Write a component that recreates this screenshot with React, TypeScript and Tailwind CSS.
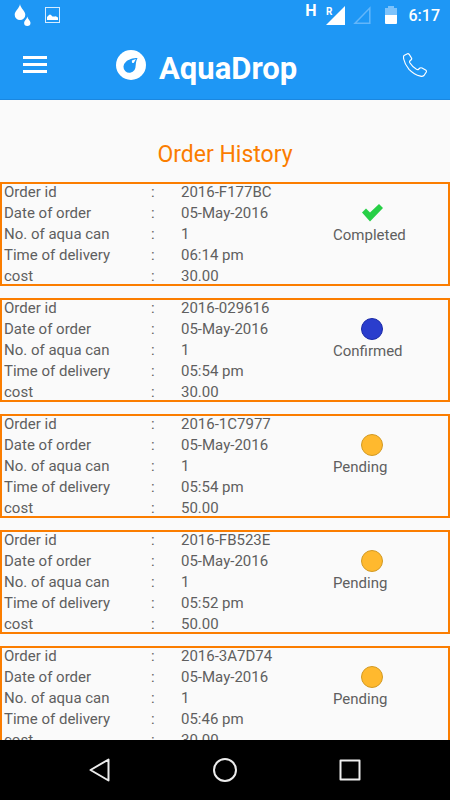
type Status = "Completed" | "Confirmed" | "Pending";

interface Order {
  id: string;
  date: string;
  cans: number;
  time: string;
  cost: string;
  status: Status;
}

const ORDERS: Order[] = [
  { id: "2016-F177BC", date: "05-May-2016", cans: 1, time: "06:14 pm", cost: "30.00", status: "Completed" },
  { id: "2016-029616", date: "05-May-2016", cans: 1, time: "05:54 pm", cost: "30.00", status: "Confirmed" },
  { id: "2016-1C7977", date: "05-May-2016", cans: 1, time: "05:54 pm", cost: "50.00", status: "Pending" },
  { id: "2016-FB523E", date: "05-May-2016", cans: 1, time: "05:52 pm", cost: "50.00", status: "Pending" },
  { id: "2016-3A7D74", date: "05-May-2016", cans: 1, time: "05:46 pm", cost: "30.00", status: "Pending" },
];

function StatusBar() {
  return (
    <div className="flex h-[30px] items-center justify-between pr-[10px] pl-[14px] text-white">
      <div className="flex items-center gap-[14px]">
        <svg className="h-[23px] w-[17px]" viewBox="0 0 17 23" fill="currentColor" aria-hidden="true">
          <path d="M6 0C6.4 4 11.3 7 11.3 10.700A5.300 5.300 0 0 1 .7 10.700C.7 7 5.600 4 6 0Z" />
          <path d="M13.300 12.500C13.500 15 16.500 16.500 16.500 18.800A3.200 3.200 0 0 1 10.100 18.800C10.100 16.500 13.100 15 13.300 12.500Z" />
        </svg>
        <svg className="h-4 w-[15px]" viewBox="0 0 15 16" aria-hidden="true">
          <rect x=".5" y=".5" width="14" height="15" fill="none" stroke="#d6ecff" />
          <path d="M2 13V10L4 8Q5 7 6 8L7.500 9.500H10Q11 9 12 10L13 10.500V13Z" fill="white" />
        </svg>
      </div>
      <div className="flex items-center">
        <span className="mr-[9px] mb-2 text-base leading-4 font-bold">H</span>
        <svg className="mr-2 h-5 w-[19px]" viewBox="0 0 19 20" fill="white" aria-hidden="true">
          <path d="M19 1V20H0Z" />
          <text x="0" y="10" fontSize="10" fontWeight="700" fontFamily="Roboto, sans-serif">R</text>
        </svg>
        <svg className="mr-[14px] h-5 w-[18px]" viewBox="0 0 18 20" fill="none" stroke="#63b6fa" strokeWidth="1.500" aria-hidden="true">
          <path d="M16.800 3V18.200H2Z" />
        </svg>
        <svg className="mr-3 h-[18px] w-3" viewBox="0 0 12 18" aria-hidden="true">
          <path d="M0 2H3V0H9V2H12V9H0Z" fill="#7cc2fb" />
          <path d="M0 9H12V17Q12 18 11 18H1Q0 18 0 17Z" fill="white" />
        </svg>
        <span className="pt-px text-base leading-5 font-medium">6:17</span>
      </div>
    </div>
  );
}

function AppBar() {
  return (
    <div className="flex h-[70px] items-center border-b border-[#1a87e0] px-[23px] text-white">
      <button type="button" aria-label="Menu" className="flex h-6 w-6 items-center">
        <svg className="h-[18px] w-6" viewBox="0 0 24 18" fill="currentColor" aria-hidden="true">
          <path d="M0 0H24V3H0ZM0 7H24V10H0ZM0 14H24V17H0Z" />
        </svg>
      </button>
      <div className="ml-[69px] flex flex-1 items-center gap-[13px]">
        <svg className="h-[30px] w-[30px]" viewBox="0 0 30 30" aria-hidden="true">
          <circle cx="15" cy="15" r="15" fill="white" />
          <path d="M21.500 8C17 8 12 9.500 9.800 12A6 6 0 1 0 18.500 20C20.500 17 18.800 13.500 21.500 8Z" fill="#1e97f5" />
          <path d="M15.800 10.500L20 9L18 12.500Q17 13.500 16 12.500Z" fill="white" />
        </svg>
        <h1 className="pt-2 text-[31px] leading-9 font-bold">AquaDrop</h1>
      </div>
      <button type="button" aria-label="Call" className="h-6 w-6">
        <svg className="h-6 w-6" viewBox="0 0 24 24" fill="none" stroke="currentColor" strokeWidth="1.200" strokeLinejoin="round" aria-hidden="true">
          <path d="M1 2.500L4.500 .7Q5.500 .4 6.200 1.400L8.500 5Q9 6 8.200 6.800L6.800 8Q6.300 8.800 7 10Q9.500 14 13.500 16.300Q14.800 17 15.500 16.300L17 15Q18 14.500 19 15L23 17.300Q23.700 18 23.300 19L21 22.500Q19.500 23.700 17.500 23.200Q11 21.500 6 16.300Q1.800 11.500 .7 6Q.2 3.500 1 2.500Z" />
        </svg>
      </button>
    </div>
  );
}

function StatusIcon({ status }: { status: Status }) {
  if (status === "Completed") {
    return (
      <svg className="h-[22px] w-[22px]" viewBox="0 0 22 22" aria-hidden="true">
        <path d="M1 10.500L5 6.500L9 10.500L18 2L22 6L9 19.500Z" fill="#27cf46" />
      </svg>
    );
  }
  return (
    <span
      className={`block size-[22px] rounded-full border ${
        status === "Confirmed" ? "border-[#1b2aa8] bg-[#2a3dcd]" : "border-[#d39a23] bg-[#ffb92e]"
      }`}
    />
  );
}

function OrderCard({ order }: { order: Order }) {
  const rows = [
    { label: "Order id", value: order.id },
    { label: "Date of order", value: order.date },
    { label: "No. of aqua can", value: order.cans },
    { label: "Time of delivery", value: order.time },
    { label: "cost", value: order.cost },
  ];

  return (
    <li className="flex border-2 border-[#fb7d00] pl-[2px]">
      <dl className="flex flex-1 flex-col gap-[5px]">
        {rows.map((row) => (
          <div key={row.label} className="flex">
            <dt className="flex w-[177px]">
              <span className="w-[147px]">{row.label}</span>
              <span>:</span>
            </dt>
            <dd>{row.value}</dd>
          </div>
        ))}
      </dl>
      <div className="w-[115px] pt-[18px]">
        <div className="mb-[3px] ml-7">
          <StatusIcon status={order.status} />
        </div>
        <p>{order.status}</p>
      </div>
    </li>
  );
}

function NavBar() {
  return (
    <nav className="flex h-[60px] shrink-0 items-center justify-center gap-[101px] bg-black text-[#ececec]">
      <button type="button" aria-label="Back" className="size-6">
        <svg className="size-6" viewBox="0 0 24 24" fill="none" stroke="currentColor" strokeWidth="2" strokeLinejoin="round" aria-hidden="true">
          <path d="M20.500 1.500V22.500L2.500 12Z" />
        </svg>
      </button>
      <button type="button" aria-label="Home" className="size-6">
        <svg className="size-6" viewBox="0 0 24 24" fill="none" stroke="currentColor" strokeWidth="2" aria-hidden="true">
          <circle cx="12" cy="12" r="11" />
        </svg>
      </button>
      <button type="button" aria-label="Recent apps" className="size-6">
        <svg className="size-6" viewBox="0 0 24 24" fill="none" stroke="currentColor" strokeWidth="2" strokeLinejoin="round" aria-hidden="true">
          <rect x="2.500" y="2.500" width="19" height="19" />
        </svg>
      </button>
    </nav>
  );
}

export default function App() {
  return (
    <div className="flex h-screen flex-col bg-[#fafafa] font-[Roboto,sans-serif]">
      <header className="shrink-0 bg-[#1e97f5]">
        <StatusBar />
        <AppBar />
      </header>
      <main className="min-h-0 flex-1 overflow-hidden">
        <h2 className="pt-[41px] pb-[13px] text-center text-[23px] leading-7 text-[#fb7d00]">Order History</h2>
        <ul className="flex flex-col gap-3 text-[15px] leading-4 text-[#5f5f5f]">
          {ORDERS.map((order) => (
            <OrderCard key={order.id} order={order} />
          ))}
        </ul>
      </main>
      <NavBar />
    </div>
  );
}
